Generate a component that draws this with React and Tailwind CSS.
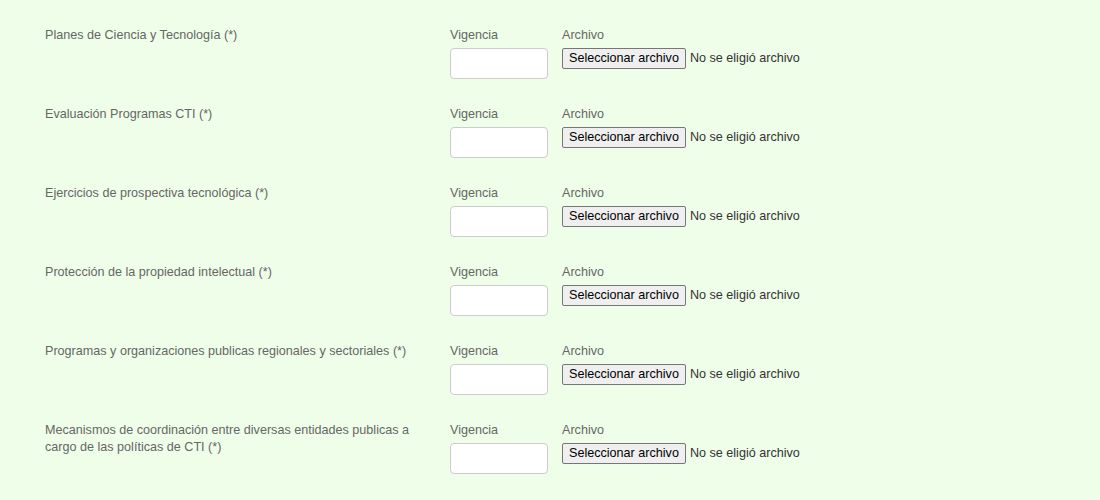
export default function App() {
  const rows = [
    "Planes de Ciencia y Tecnología (*)",
    "Evaluación Programas CTI (*)",
    "Ejercicios de prospectiva tecnológica (*)",
    "Protección de la propiedad intelectual (*)",
    "Programas y organizaciones publicas regionales y sectoriales (*)",
    "Mecanismos de coordinación entre diversas entidades publicas a cargo de las políticas de CTI (*)",
  ];
  return (
    <div className="w-[1100px] h-[500px] bg-[#effee9] pt-[27px] text-[12.6px] text-[#666]" style={{ fontFamily: '"Liberation Sans", Arial, sans-serif' }}>
      {rows.map((r, i) => (
        <div key={i} className="flex h-[79px]">
          <div className="w-[450px] pl-[45px] pr-[15px] leading-[17px]">{r}</div>
          <div className="w-[112px] flex flex-col">
            <span className="leading-[16px]">Vigencia</span>
            <div className="mt-[5px] w-[98px] h-[31px] bg-white border border-[#ccc] rounded-[4px]"></div>
          </div>
          <div className="flex flex-col">
            <span className="leading-[16px]">Archivo</span>
            <div className="mt-[5px] flex items-center">
              <span className="h-[21px] px-[6px] flex items-center bg-[#efefef] border border-[#767676] rounded-[2px] text-black">Seleccionar archivo</span>
              <span className="ml-[4px] text-[#333]">No se eligió archivo</span>
            </div>
          </div>
        </div>
      ))}
    </div>
  );
}
